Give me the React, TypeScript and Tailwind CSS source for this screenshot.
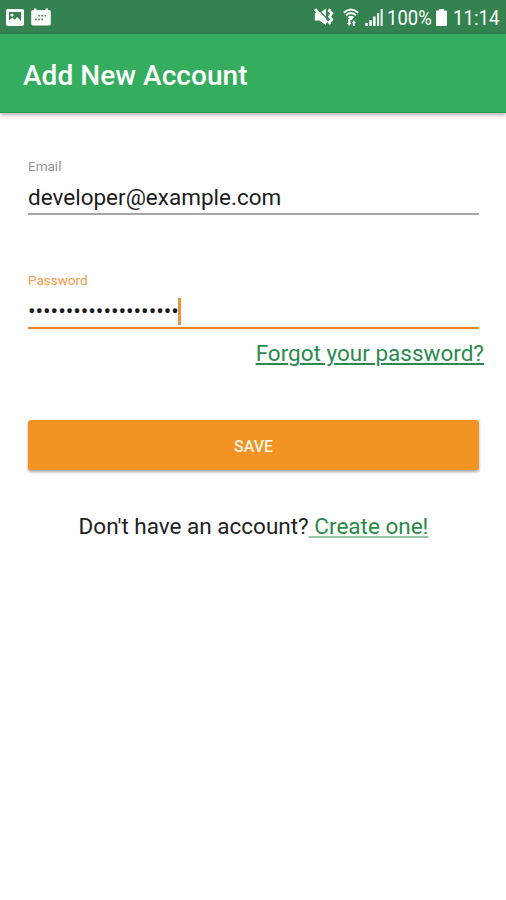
import { clsx } from 'clsx';

interface FieldProps {
  label: string;
  value: string;
  focused?: boolean;
}

function PictureIcon() {
  return (
    <svg width="18" height="17" viewBox="0 0 18 17" fill="none">
      <rect width="18" height="17" rx="2" fill="#fff" />
      <path d="M3 3h12v9l-3.800-4-2.200 2.400-2.800-1.600L3 11.500z" fill="#34824f" />
      <circle cx="6" cy="6" r="1.600" fill="#fff" />
    </svg>
  );
}

function CalendarIcon() {
  return (
    <svg width="20" height="18" viewBox="0 0 20 18" fill="#fff">
      <path d="M2 2h1V.4h2.400V2h9.200V.4H17V2h1a1.800 1.800 0 0 1 1.800 1.800v12A1.800 1.800 0 0 1 18 17.600H2A1.800 1.800 0 0 1 .2 15.800V3.800A1.800 1.800 0 0 1 2 2z" />
      <path
        d="M7.200 7h1.600v1.600H7.200zM10.400 7H12v1.600h-1.600zM13.600 7h1.600v1.600h-1.600zM4 10.600h1.600v1.600H4zM7.200 10.600h1.600v1.600H7.200zM10.400 10.600H12v1.600h-1.600z"
        fill="#34824f"
      />
    </svg>
  );
}

function VibrateIcon() {
  return (
    <svg width="20" height="18" viewBox="0 0 20 18" fill="none">
      <path d="M.8 5h4.500L12 .8v16.400L5.300 12.500H.8z" fill="#fff" />
      <path d="m3.600.6 9 9.400" stroke="#34824f" strokeWidth="1.300" />
      <path d="m1 1.200 12 13.600" stroke="#fff" strokeWidth="3" />
      <path d="m16.200 1-1 2L17.800 5.500l-2.300 3 2.300 3-2.600 2.500 1 2.200" stroke="#fff" strokeWidth="2.600" />
    </svg>
  );
}

function WifiIcon() {
  return (
    <svg width="16" height="18" viewBox="0 0 16 18" fill="none">
      <path d="M.8 4.800Q8-1.900 15.200 4.800M3 7.300q5-4.500 10 0" stroke="#fff" strokeWidth="2" />
      <path d="M4.800 9Q8 6.300 11.200 9L8 12.400z" fill="#fff" />
      <path d="M5 11h2.400v4h1l-2.200 3L4 15h1zM10 18h1.800v-3h1l-1.900-3-1.900 3h1z" fill="#fff" />
    </svg>
  );
}

function SignalIcon() {
  return (
    <svg width="18" height="17" viewBox="0 0 18 17" fill="#fff">
      <path d="M.3 14h2.600v3H.3zM4.300 11h2.500v6H4.300zM8.100 7.500h2.500V17H8.100z" />
      <path d="M12 4h2.200v13H12zM15.600 0h2.200v17h-2.200z" opacity=".85" />
    </svg>
  );
}

function BatteryIcon() {
  return (
    <svg width="11" height="17" viewBox="0 0 11 17" fill="#fff">
      <path d="M3 0h5v1.500h2A1 1 0 0 1 11 2.500V16a1 1 0 0 1-1 1H1a1 1 0 0 1-1-1V2.500a1 1 0 0 1 1-1h2z" />
    </svg>
  );
}

function StatusBar() {
  return (
    <div className="flex h-[34px] items-center bg-[#34824f] pl-[6px] text-[21px] leading-7 text-white">
      <PictureIcon />
      <div className="ml-[7px]">
        <CalendarIcon />
      </div>
      <div className="ml-[263px]">
        <VibrateIcon />
      </div>
      <div className="ml-[9px]">
        <WifiIcon />
      </div>
      <div className="ml-[6px]">
        <SignalIcon />
      </div>
      <span className="ml-[4px] w-[45px] origin-left scale-x-[0.88] pt-[2px]">100%</span>
      <div className="ml-[4px]">
        <BatteryIcon />
      </div>
      <span className="ml-[6px] w-[47px] origin-left scale-x-[0.89] pt-[2px]">11:14</span>
    </div>
  );
}

function Field({ label, value, focused }: FieldProps) {
  return (
    <div>
      <div className={clsx('text-[13.5px] leading-4', focused ? 'text-[#f29a48]' : 'text-[#969696]')}>
        {label}
      </div>
      <div
        className={clsx(
          'flex h-[41px] items-center border-b-2 pt-[7px] text-[22.5px] leading-none text-[#1c1c1c]',
          focused ? 'border-[#e5862a]' : 'border-[#a6a6a6]'
        )}
      >
        <span className={clsx('whitespace-nowrap', focused && 'tracking-[-0.05px]')}>{value}</span>
        {focused && <span className="-ml-px h-[27px] w-[3px] bg-[#e59544]" />}
      </div>
    </div>
  );
}

export default function App() {
  return (
    <div className="h-[900px] w-[506px] overflow-hidden bg-[#fefefe] font-[Roboto,sans-serif]">
      <StatusBar />

      <header className="flex h-[79px] items-center border-b border-[#2c9952] bg-[#34ae5e] pl-[23px] pt-[5px] shadow-[0_2px_4px_rgba(0,0,0,0.3)]">
        <h1 className="text-[28px] font-medium tracking-[0.05px] text-white">Add New Account</h1>
      </header>

      <main className="pl-[28px] pr-[27px] pt-[45px]">
        <Field label="Email" value="developer@example.com" />
        <div className="mt-[57px]">
          <Field label="Password" value="••••••••••••••••••••" focused />
        </div>

        <div className="-mr-[5px] mt-[10px] text-right">
          <a className="text-[22.5px] leading-[28px] text-[#2b8a50] underline decoration-2 underline-offset-2">
            Forgot your password?
          </a>
        </div>

        <button className="mt-[52px] flex h-[50px] w-full items-center justify-center rounded-[3px] bg-[#f29423] pt-[3px] text-[16px] font-medium text-[#fff3e2] shadow-[0_2px_3px_rgba(0,0,0,0.35)]">
          SAVE
        </button>

        <p className="mt-[42px] whitespace-pre text-center text-[22.5px] leading-[28px] text-[#222222]">
          Don't have an account?
          <a className="text-[#2b8a45] underline decoration-[#9cc5aa] decoration-2 underline-offset-2"> Create one!</a>
        </p>
      </main>
    </div>
  );
}
